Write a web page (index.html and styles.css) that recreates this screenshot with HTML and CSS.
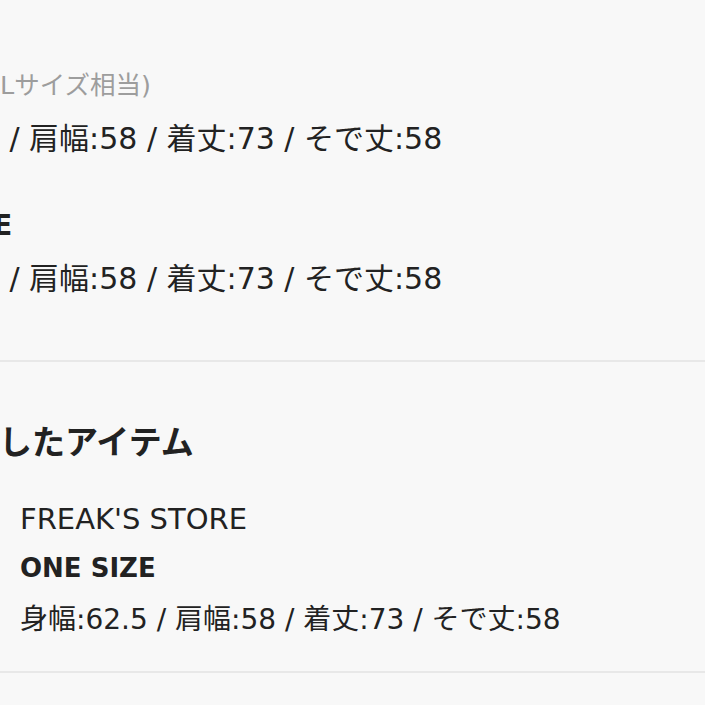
FILE: index.html
```html
<!DOCTYPE html>
<html lang="ja">
<head>
<meta charset="utf-8">
<title>着用アイテム</title>
<link rel="stylesheet" href="styles.css">
</head>
<body>
<div class="page">
  <section class="model">
    <p class="caption">着用(メンズLサイズ相当)</p>
    <p class="size-row">身幅:62.5 / 肩幅:58 / 着丈:73 / そで丈:58</p>
    <p class="size-name size-name-gap">ONE SIZE</p>
    <p class="size-row size-row-tight">身幅:62.5 / 肩幅:58 / 着丈:73 / そで丈:58</p>
  </section>
  <section class="items">
    <h2 class="heading">今回着用したアイテム</h2>
    <div class="item">
      <div class="thumb"></div>
      <div class="item-info">
        <p class="brand">FREAK'S STORE</p>
        <p class="size-name">ONE SIZE</p>
        <p class="size-row">身幅:62.5 / 肩幅:58 / 着丈:73 / そで丈:58</p>
      </div>
    </div>
  </section>
</div>
</body>
</html>
```

FILE: styles.css
```css
html, body {
  margin: 0;
  padding: 0;
  background: #f8f8f8;
  overflow: hidden;
}

.page {
  margin-left: -147px;
  width: 900px;
  color: #222222;
  font-family: "DejaVu Sans", "Noto Sans CJK JP", sans-serif;
}

p, h2 {
  margin: 0;
}

.size-row {
  font-size: 28px;
  line-height: 40px;
  white-space: nowrap;
}

.size-name {
  font-size: 26px;
  line-height: 40px;
  font-weight: 700;
}

/* upper block (model sizes) */
.model {
  padding: 69px 0 61px 10px;
  border-bottom: 2px solid #e8e8e8;
}

.caption {
  font-size: 25.5px;
  line-height: 32px;
  color: #9d9d9d;
  white-space: nowrap;
}

.model .size-row {
  font-size: 30px;
  margin-top: 18px;
}

.model .size-name {
  font-size: 28.6px;
}

.model .size-name-gap {
  margin-top: 46px;
}

.model .size-row-tight {
  margin-top: 14px;
}

/* lower block (items) */
.items {
  padding: 56px 0 31px 20px;
  border-bottom: 2px solid #e8e8e8;
}

.heading {
  margin-left: -6px;
  font-family: "Noto Sans CJK JP", sans-serif;
  font-size: 33px;
  line-height: 44px;
  font-weight: 700;
  white-space: nowrap;
}

.item {
  display: flex;
  gap: 27px;
  margin-top: 37px;
}

.thumb {
  width: 120px;
  height: 120px;
  flex: none;
  background: #eeeeee;
}

.brand {
  font-size: 29px;
  line-height: 40px;
}

.item-info .size-name {
  margin-top: 9px;
}

.item-info .size-row {
  margin-top: 12px;
}
```
